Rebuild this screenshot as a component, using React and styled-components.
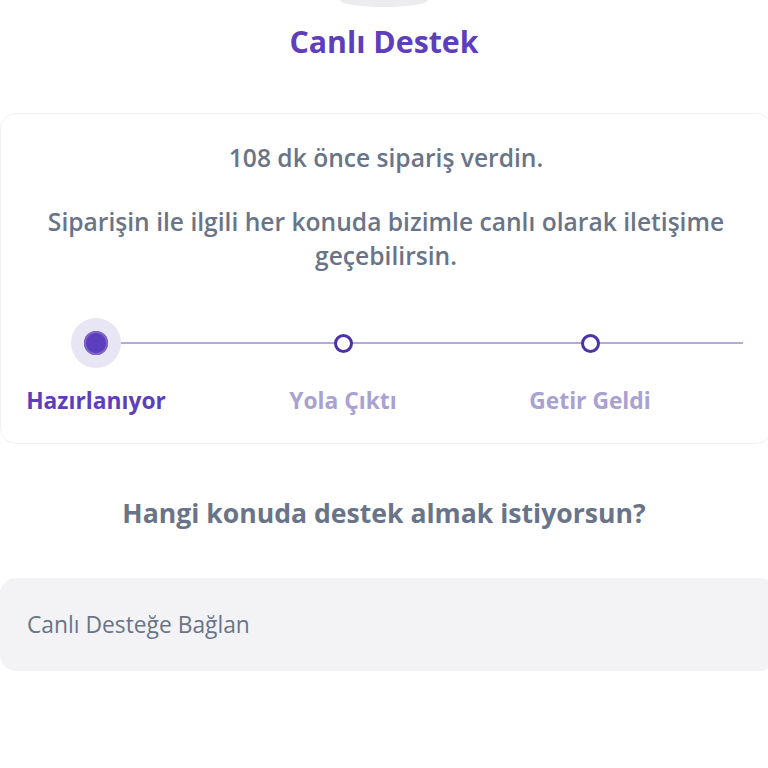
import React from 'react';
import styled, { createGlobalStyle } from 'styled-components';

const GlobalStyle = createGlobalStyle`
  html, body {
    margin: 0;
    padding: 0;
    background: #ffffff;
    font-family: "Open Sans", "Noto Sans", sans-serif;
  }
  * { box-sizing: border-box; }
`;

const Page = styled.div`
  width: 768px;
  height: 768px;
  overflow: hidden;
  display: flex;
  flex-direction: column;
  align-items: center;
`;

const Handle = styled.div`
  width: 88px;
  height: 14px;
  margin-top: -7px;
  border-radius: 50%;
  background: #ececef;
`;

const Title = styled.h1`
  margin: 15px 0 0;
  font-size: 30.3px;
  line-height: 40px;
  font-weight: 700;
  color: #5d3ebc;
`;

const Card = styled.div`
  margin-top: 51px;
  width: 772px;
  margin-left: 4px;
  border: 1px solid #f1f1f4;
  border-radius: 16px;
  padding: 27px 0 27px;
  display: flex;
  flex-direction: column;
  align-items: center;
`;

const Text = styled.p`
  margin: ${p => p.$top || 0}px 0 0;
  padding: 0 30px;
  font-size: 24.6px;
  line-height: 34px;
  font-weight: 600;
  color: #697488;
  text-align: center;
`;

const Stepper = styled.div`
  position: relative;
  align-self: stretch;
  margin-top: 45px;
  padding-left: 5px;
  display: grid;
  grid-template-columns: repeat(3, 180px);
  column-gap: 67px;

  &::before {
    content: '';
    position: absolute;
    left: 99px;
    right: 28px;
    top: 24px;
    height: 2px;
    background: #b4a9dd;
  }
`;

const Step = styled.div`
  position: relative;
  display: flex;
  flex-direction: column;
  align-items: center;
`;

const DotWrap = styled.div`
  width: 50px;
  height: 50px;
  display: flex;
  align-items: center;
  justify-content: center;
  border-radius: 50%;
  background: ${p => (p.$active ? '#e8e5f4' : 'transparent')};
`;

const Dot = styled.div`
  border-radius: 50%;
  ${p =>
    p.$active
      ? `
    width: 24px;
    height: 24px;
    background: #5d3ebc;
    box-shadow: inset 0 0 0 2px #7b63cc;
  `
      : `
    width: 19px;
    height: 19px;
    background: #ffffff;
    border: 3.5px solid #4c32a8;
  `}
`;

const StepLabel = styled.div`
  margin-top: 18px;
  font-size: 22.8px;
  line-height: 30px;
  font-weight: 700;
  white-space: nowrap;
  color: ${p => (p.$active ? '#5d3ebc' : '#a9a1d2')};
`;

const Question = styled.h2`
  margin: 53px 0 0;
  font-size: 26.6px;
  line-height: 32px;
  font-weight: 700;
  color: #697488;
`;

const SupportButton = styled.button`
  margin-top: 49px;
  width: 776px;
  margin-left: 8px;
  height: 93px;
  border: none;
  border-radius: 16px;
  background: #f3f3f6;
  padding: 0 27px;
  text-align: left;
  font-family: inherit;
  font-size: 22.8px;
  font-weight: 400;
  color: #697488;
  cursor: pointer;
`;

const steps = [
  { label: 'Hazırlanıyor', active: true },
  { label: 'Yola Çıktı' },
  { label: 'Getir Geldi' },
];

export default function App() {
  return (
    <>
      <GlobalStyle />
      <Page>
        <Handle />
        <Title>Canlı Destek</Title>
        <Card>
          <Text>108 dk önce sipariş verdin.</Text>
          <Text $top={30}>
            Siparişin ile ilgili her konuda bizimle canlı olarak iletişime geçebilirsin.
          </Text>
          <Stepper>
            {steps.map(s => (
              <Step key={s.label}>
                <DotWrap $active={s.active}>
                  <Dot $active={s.active} />
                </DotWrap>
                <StepLabel $active={s.active}>{s.label}</StepLabel>
              </Step>
            ))}
          </Stepper>
        </Card>
        <Question>Hangi konuda destek almak istiyorsun?</Question>
        <SupportButton>Canlı Desteğe Bağlan</SupportButton>
      </Page>
    </>
  );
}
